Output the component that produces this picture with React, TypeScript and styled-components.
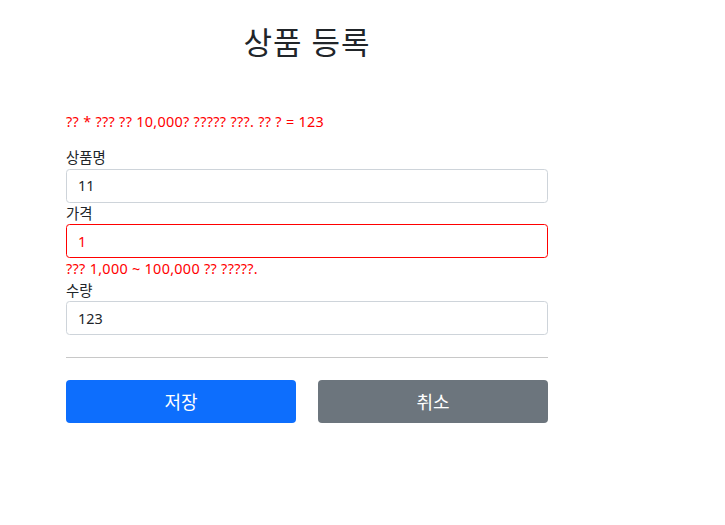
import React from "react";
import styled, { createGlobalStyle } from "styled-components";

const GlobalStyle = createGlobalStyle`
  html, body { margin: 0; padding: 0; background: #fff; }
  body {
    font-family: "Noto Sans", "Noto Sans CJK KR", sans-serif;
    color: #212529;
    font-size: 14.4px;
    line-height: 1.5;
  }
  * { box-sizing: border-box; }
`;

const Container = styled.div`
  width: 482px;
  margin-left: 66px;
`;

const Header = styled.header`
  padding-top: 24px;
  padding-bottom: 51px;
  text-align: center;
`;

const Title = styled.h2`
  margin: 0;
  font-size: 31px;
  font-weight: 400;
  line-height: 36px;
  letter-spacing: 1px;
`;

const Form = styled.form`
  display: flex;
  flex-direction: column;
`;

const GlobalError = styled.p`
  margin: 0 0 14.4px;
  color: #ff0000;
  font-size: 14.4px;
  line-height: 21.6px;
  letter-spacing: 0.3px;
`;

const Field = styled.div`
  display: flex;
  flex-direction: column;
`;

const Label = styled.label`
  font-size: 14.4px;
  line-height: 21.6px;
`;

const Input = styled.input<{ $error?: boolean }>`
  display: block;
  width: 100%;
  height: 34px;
  padding: 0 11px;
  font-family: inherit;
  font-size: 14.4px;
  color: ${(p) => (p.$error ? "#ff0000" : "#212529")};
  background: #fff;
  border: 1px solid ${(p) => (p.$error ? "#ff0000" : "#ced4da")};
  border-radius: 3.6px;
  outline: none;
`;

const FieldError = styled.div`
  color: #ff0000;
  font-size: 14.4px;
  line-height: 21.6px;
  letter-spacing: 0.3px;
`;

const Divider = styled.hr`
  margin: 21.6px 0;
  border: 0;
  border-top: 1px solid #c8c8c8;
  height: 0;
`;

const ButtonRow = styled.div`
  display: grid;
  grid-template-columns: 1fr 1fr;
  column-gap: 22px;
`;

const Button = styled.button<{ $variant: "primary" | "secondary" }>`
  height: 43px;
  border: 0;
  border-radius: 4px;
  font-family: inherit;
  font-size: 18px;
  color: #fff;
  background: ${(p) => (p.$variant === "primary" ? "#0d6efd" : "#6c757d")};
  cursor: pointer;
`;

export default function App() {
  return (
    <>
      <GlobalStyle />
      <Container>
        <Header>
          <Title>상품 등록</Title>
        </Header>
        <Form onSubmit={(e) => e.preventDefault()}>
          <GlobalError>?? * ??? ?? 10,000? ????? ???. ?? ? = 123</GlobalError>
          <Field>
            <Label htmlFor="itemName">상품명</Label>
            <Input id="itemName" defaultValue="11" />
          </Field>
          <Field>
            <Label htmlFor="price">가격</Label>
            <Input id="price" $error defaultValue="1" />
            <FieldError>??? 1,000 ~ 100,000 ?? ?????.</FieldError>
          </Field>
          <Field>
            <Label htmlFor="quantity">수량</Label>
            <Input id="quantity" defaultValue="123" />
          </Field>
          <Divider />
          <ButtonRow>
            <Button type="submit" $variant="primary">저장</Button>
            <Button type="button" $variant="secondary">취소</Button>
          </ButtonRow>
        </Form>
      </Container>
    </>
  );
}
